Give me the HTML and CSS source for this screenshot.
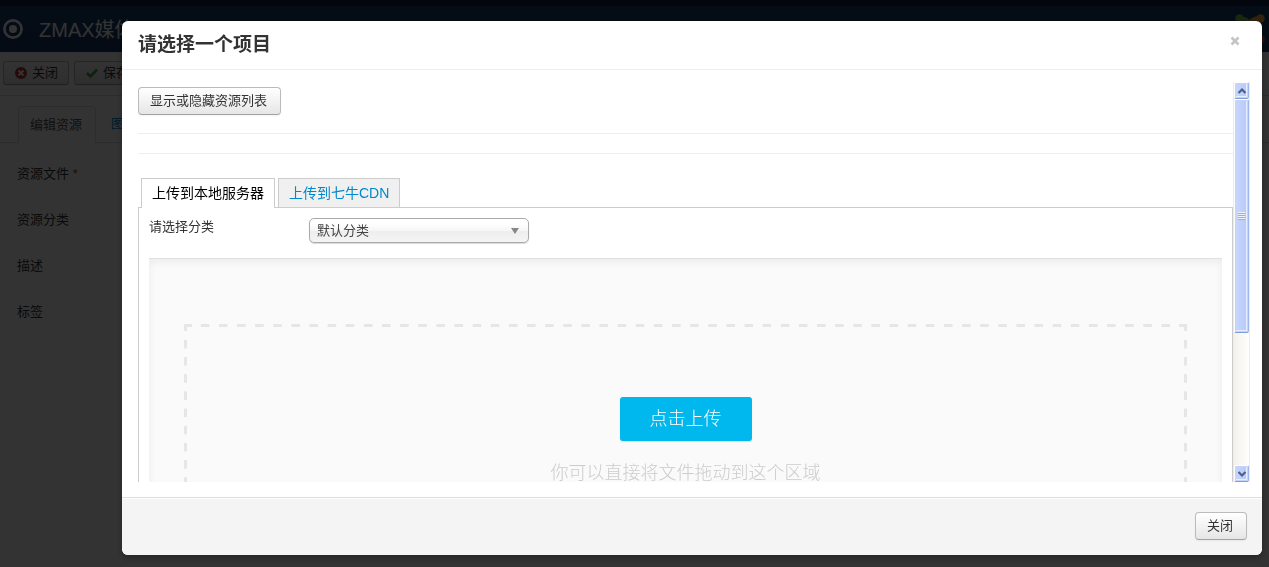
FILE: index.html
```html
<!DOCTYPE html>
<html lang="zh-CN">
<head>
<meta charset="utf-8">
<title>ZMAX媒体</title>
<link rel="stylesheet" href="styles.css">
</head>
<body>
<div class="page">
  <div class="navbar"></div>
  <header class="header">
    <svg class="header-icon" viewBox="0 0 20 20" aria-hidden="true"><circle cx="10" cy="10" r="8.6" fill="none" stroke="currentColor" stroke-width="2.6"/><circle cx="10" cy="10" r="4" fill="currentColor"/></svg>
    <h1 class="header-title">ZMAX媒体</h1>
    <svg class="brand" viewBox="0 0 30 30" aria-hidden="true">
      <g fill="none" stroke-width="4.5"><path d="M5 5Q11 4 16 11" stroke="#7ac143"/><path d="M25 5Q19 3 12 12" stroke="#f9a541"/><path d="M25 25Q26 17 19 13" stroke="#f44321"/></g>
      <circle cx="4.500" cy="4.500" r="4.200" fill="#7ac143"/><circle cx="25.500" cy="4.500" r="4.200" fill="#f9a541"/><circle cx="25.500" cy="25.500" r="4.200" fill="#f44321"/>
    </svg>
  </header>
  <div class="toolbar">
    <button class="btn btn-small" type="button"><svg class="btn-icon" viewBox="0 0 12 12" aria-hidden="true"><circle cx="6" cy="6" r="6" fill="#bd362f"/><path d="M3.500 3.500l5 5M8.500 3.500l-5 5" stroke="#fff" stroke-width="2"/></svg>关闭</button>
    <button class="btn btn-small" type="button"><svg class="btn-icon" viewBox="0 0 12 12" aria-hidden="true"><path d="M1 6l3.500 3.500L11 2.500" fill="none" stroke="#46a546" stroke-width="2.600"/></svg>保存</button>
  </div>
  <nav class="page-tabs"><a class="page-tab page-tab-active" href="#edit">编辑资源</a><a class="page-tab" href="#image">图片</a></nav>
  <div class="fields" id="edit">
    <div>资源文件 <span class="required">*</span></div>
    <div>资源分类</div>
    <div>描述</div>
    <div>标签</div>
  </div>
</div>

<div class="backdrop">
  <section class="modal" role="dialog" aria-modal="true" aria-labelledby="modal-title">
    <div class="modal-header">
      <h2 class="modal-title" id="modal-title">请选择一个项目</h2>
      <button class="modal-close" type="button" aria-label="关闭窗口"><svg viewBox="0 0 10 10" aria-hidden="true"><path d="M1.500 1.500l7 7M8.500 1.500l-7 7" stroke="currentColor" stroke-width="2.600"/></svg></button>
    </div>
    <div class="modal-body">
      <div class="viewport">
        <div class="content">
          <button class="btn" type="button">显示或隐藏资源列表</button>
          <hr class="rule">
          <hr class="rule rule-last">
          <nav class="tabs"><a class="tab tab-active" href="#local">上传到本地服务器</a><a class="tab" href="#cdn">上传到七牛CDN</a></nav>
          <div class="tab-panel" id="local">
            <div class="category">
              <label class="category-label" for="category">请选择分类</label>
              <div class="select-wrap"><select class="select" id="category"><option>默认分类</option></select></div>
            </div>
            <div class="uploader">
              <div class="dropzone">
                <button class="upload" type="button">点击上传</button>
                <p class="hint">你可以直接将文件拖动到这个区域</p>
              </div>
            </div>
          </div>
        </div>
        <div class="scrollbar" aria-hidden="true">
          <div class="scroll-arrow"><svg viewBox="0 0 10 8"><path d="M1.500 6L5 2.500 8.500 6" fill="none" stroke="#4d6185" stroke-width="2.200"/></svg></div>
          <div class="scroll-thumb"><div class="scroll-grip"></div></div>
          <div class="scroll-arrow scroll-down"><svg viewBox="0 0 10 8"><path d="M1.500 2L5 5.500 8.500 2" fill="none" stroke="#4d6185" stroke-width="2.200"/></svg></div>
        </div>
      </div>
    </div>
    <div class="modal-footer"><button class="btn" type="button">关闭</button></div>
  </section>
</div>
</body>
</html>
```
FILE: styles.css
```css
* { box-sizing: border-box; }
body {
  margin: 0;
  overflow: hidden;
  background: #fff;
  color: #333;
  font: 13px/18px "Liberation Sans", "Noto Sans CJK SC", sans-serif;
}
button, select { font: inherit; color: inherit; }
a { color: #08c; text-decoration: none; }

.page { min-height: 100vh; }
.navbar { height: 6px; background: #10223e; }
.header {
  display: flex;
  align-items: center;
  height: 46px;
  padding: 0 4px 0 3px;
  background: linear-gradient(#17406f, #1a3867);
  color: #fff;
}
.header-icon { width: 20px; height: 20px; margin-right: 16px; }
.header-title { margin: 0; padding-top: 2px; font-size: 20px; line-height: 28px; font-weight: 400; }
.brand { width: 30px; height: 30px; margin-left: auto; }
.toolbar {
  display: flex;
  gap: 5px;
  padding: 9px 3px 10px;
  border-bottom: 1px solid #ddd;
}
.btn {
  height: 28px;
  padding: 0 12px 0 11px;
  border: 1px solid #bbb;
  border-bottom-color: #a2a2a2;
  border-radius: 4px;
  background: linear-gradient(#fff, #e6e6e6);
  box-shadow: 0 1px 2px rgba(0, 0, 0, .05);
  white-space: nowrap;
}
.content .btn, .modal-footer .btn { padding-right: 13px; }
.btn-small { display: flex; align-items: center; gap: 5px; height: 24px; padding: 0 10px 0 11px; border-radius: 3px; }
.btn-icon { width: 12px; height: 12px; }
.page-tabs { display: flex; margin-top: 10px; padding-left: 18px; border-bottom: 1px solid #ddd; }
.page-tab { padding: 9px 12px 8px 15px; }
.page-tab-active {
  margin-bottom: -1px;
  padding: 9px 13px 9px 11px;
  border: 1px solid #ddd;
  border-bottom: 0;
  border-radius: 4px 4px 0 0;
  background: #fff;
  color: #555;
}
.fields { display: grid; gap: 28px; padding: 22px 17px; }
.required { color: #a64b00; }

.backdrop {
  position: fixed;
  inset: 0;
  padding: 21px 7px 12px 122px;
  background: rgba(0, 0, 0, .8);
}
.modal {
  overflow: hidden;
  border-radius: 6px;
  background: #fff;
  box-shadow: 0 3px 7px rgba(0, 0, 0, .3);
}
.modal-header {
  display: flex;
  justify-content: space-between;
  padding: 10px 22px 10px 16px;
  border-bottom: 1px solid #eee;
}
.modal-title { margin: 0; font-size: 19px; line-height: 28px; font-weight: 700; }
.modal-close {
  width: 10px;
  height: 20px;
  padding: 0;
  border: 0;
  background: none;
  color: #c4c4c4;
}
.modal-close svg { display: block; width: 10px; height: 10px; }
.modal-body { padding: 12px 12px 15px 16px; }
.viewport { display: flex; height: 400px; overflow: hidden; }
.content { flex: 1; padding-top: 5px; }
.rule { margin: 18px 0; border: 0; border-top: 1px solid #eee; }
.rule-last { margin: 19px 0 24px; }
.tabs { position: relative; display: flex; gap: 3px; padding-left: 3px; }
.tab {
  padding: 5px 10px;
  border: 1px solid #ccc;
  border-bottom: 0;
  background: #f0f0f0;
  font-size: 14px;
  line-height: 18px;
}
.tab-active { margin-bottom: -1px; padding-bottom: 6px; background: #fff; color: #000; }
.tab-panel { padding: 10px; border: 1px solid #ccc; }
.category { display: flex; margin-bottom: 15px; }
.category-label { width: 160px; }
.select-wrap { position: relative; width: 220px; }
.select-wrap::after {
  content: "";
  position: absolute;
  top: 10px;
  right: 10px;
  border: 4px solid transparent;
  border-top: 6px solid #888;
  border-bottom: 0;
  pointer-events: none;
}
.select {
  appearance: none;
  display: block;
  width: 100%;
  height: 25px;
  padding: 1px 24px 0 7px;
  border: 1px solid #aaa;
  border-radius: 5px;
  background: linear-gradient(#fff 20%, #f6f6f6 50%, #eee 52%, #f4f4f4 100%);
  box-shadow: 0 1px 1px rgba(0, 0, 0, .15);
  color: #444;
}
.uploader {
  padding: 65px 35px;
  border-top: 1px solid #e0e0e0;
  background: #fafafa;
  box-shadow: inset 0 3px 8px rgba(0, 0, 0, .06);
}
.dropzone {
  --dash: linear-gradient(#e6e6e6, #e6e6e6);
  position: relative;
  display: flex;
  flex-direction: column;
  align-items: center;
  min-height: 282px;
  padding-top: 73px;
  background:
    var(--dash) 0 0 / 8px 3px, var(--dash) 0 0 / 3px 7px,
    var(--dash) 100% 0 / 8px 3px, var(--dash) 100% 0 / 3px 7px,
    var(--dash) 0 100% / 8px 3px, var(--dash) 0 100% / 3px 7px,
    var(--dash) 100% 100% / 8px 3px, var(--dash) 100% 100% / 3px 7px;
  background-repeat: no-repeat;
}
.dropzone::before, .dropzone::after { content: ""; position: absolute; pointer-events: none; }
.dropzone::before {
  inset: 0 12px;
  --row: linear-gradient(90deg, transparent 25%, #e6e6e6 25% 75%, transparent 75%);
  background: var(--row) 0 0 / 18px 3px, var(--row) 0 100% / 18px 3px;
  background-repeat: round no-repeat;
}
.dropzone::after {
  inset: 12px 0;
  --column: linear-gradient(transparent 25%, #e6e6e6 25% 75%, transparent 75%);
  background: var(--column) 0 0 / 3px 17px, var(--column) 100% 0 / 3px 17px;
  background-repeat: no-repeat round;
}
.upload {
  height: 44px;
  padding: 0 30px;
  border: 0;
  border-radius: 3px;
  background: #00b7ee;
  box-shadow: 0 1px 1px rgba(0, 0, 0, .1);
  color: #fff;
  font-size: 18px;
  font-weight: 300;
}
.hint { margin: 19px 0 0; color: #ccc; font-size: 18px; line-height: 26px; font-weight: 300; }
.scrollbar {
  display: flex;
  flex-direction: column;
  width: 17px;
  border-left: 1px solid #eeede5;
  border-right: 1px solid #eeede5;
  background: linear-gradient(90deg, #f3f1ec, #fefefb);
}
.scroll-arrow, .scroll-thumb {
  border: 1px solid #fff;
  border-right-color: #9db8e8;
  border-bottom-color: #7d9fd8;
  border-radius: 2px;
  background: linear-gradient(90deg, #c9d7fc, #b4c8f8);
  box-shadow: inset 0 0 0 1px #c3d3fc, inset -1px -1px 0 1px #e6eeff;
}
.scroll-arrow { display: grid; place-items: center; height: 17px; }
.scroll-arrow svg { width: 10px; height: 8px; }
.scroll-thumb { display: grid; place-items: center; height: 234px; }
.scroll-grip { width: 7px; height: 8px; background: repeating-linear-gradient(#eef4fe 0 1px, #8cb0f8 1px 2px); }
.scroll-down { margin-top: auto; }
.modal-footer {
  display: flex;
  justify-content: flex-end;
  padding: 14px 15px 15px;
  border-top: 1px solid #ddd;
  background: #f4f4f4;
  box-shadow: inset 0 1px 0 #fff;
}
```
